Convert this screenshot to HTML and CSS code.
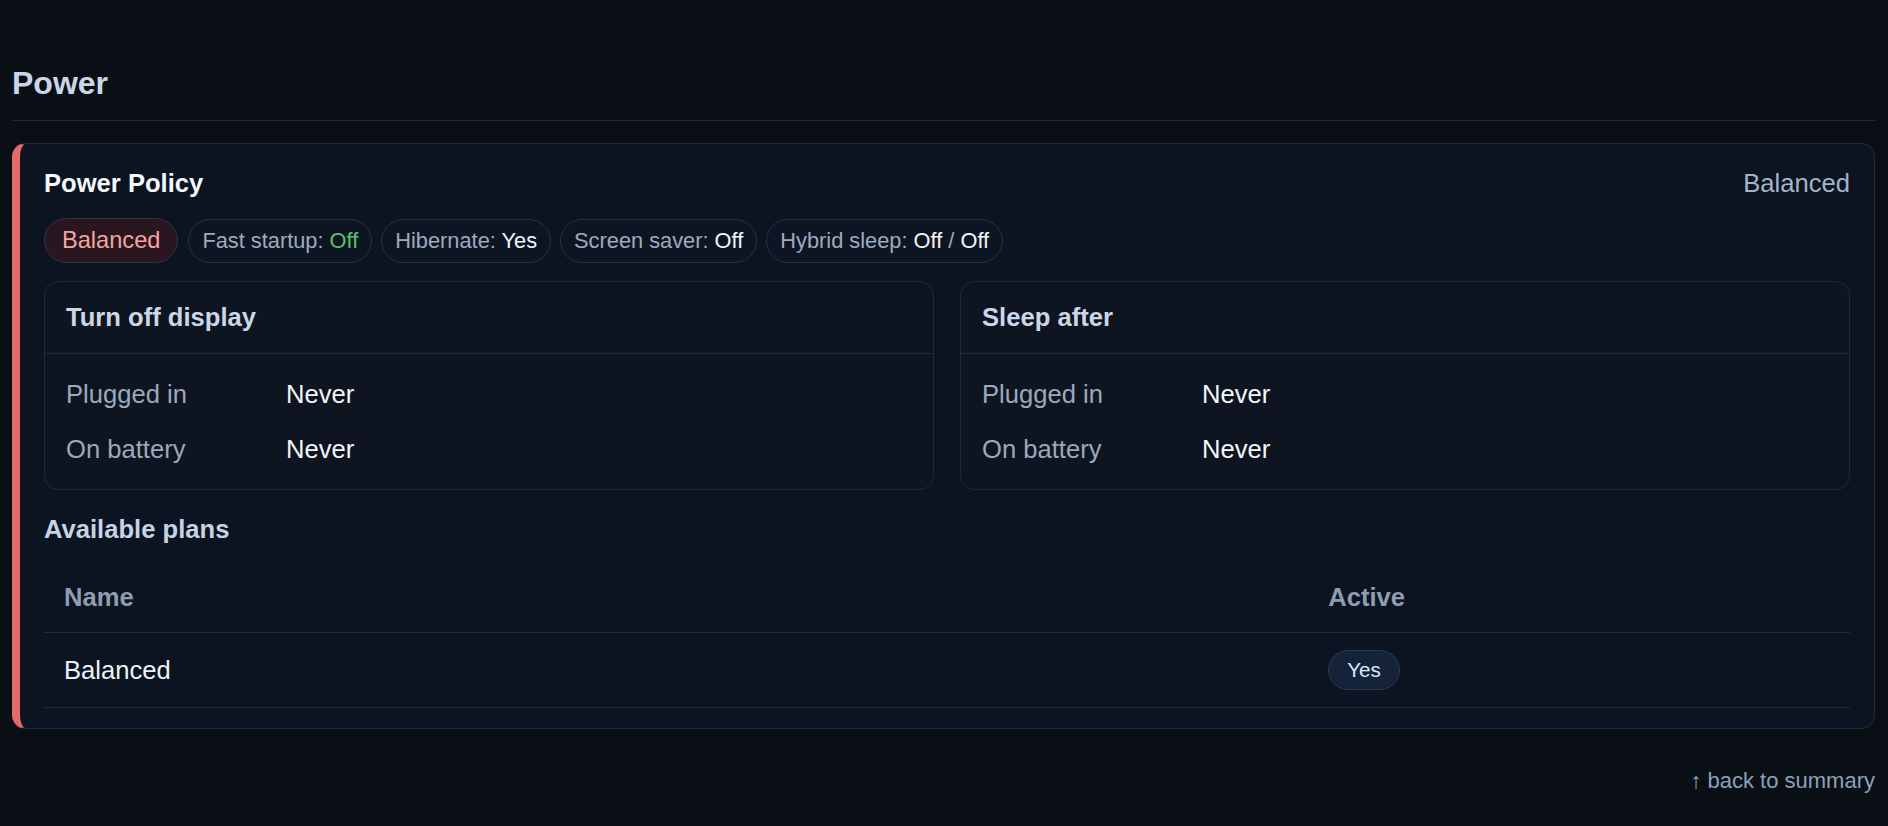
FILE: index.html
```html
<!DOCTYPE html>
<html lang="en">
<head>
<meta charset="utf-8">
<title>Power</title>
<link rel="stylesheet" href="styles.css">
</head>
<body>
<main class="page">
  <h2 class="section-title">Power</h2>

  <section class="card">
    <div class="card-head">
      <h3 class="card-title">Power Policy</h3>
      <span class="card-meta">Balanced</span>
    </div>

    <div class="chips">
      <span class="chip chip-accent">Balanced</span>
      <span class="chip">Fast startup: <b class="v v-good">Off</b></span>
      <span class="chip">Hibernate: <b class="v">Yes</b></span>
      <span class="chip">Screen saver: <b class="v">Off</b></span>
      <span class="chip">Hybrid sleep: <b class="v">Off</b> / <b class="v">Off</b></span>
    </div>

    <div class="panels">
      <div class="panel">
        <div class="panel-head">Turn off display</div>
        <div class="kv">
          <span class="k">Plugged in</span><span class="val">Never</span>
          <span class="k">On battery</span><span class="val">Never</span>
        </div>
      </div>
      <div class="panel">
        <div class="panel-head">Sleep after</div>
        <div class="kv">
          <span class="k">Plugged in</span><span class="val">Never</span>
          <span class="k">On battery</span><span class="val">Never</span>
        </div>
      </div>
    </div>

    <h4 class="sub-title">Available plans</h4>
    <table class="plans">
      <thead>
        <tr><th class="col-name">Name</th><th>Active</th></tr>
      </thead>
      <tbody>
        <tr><td>Balanced</td><td><span class="pill">Yes</span></td></tr>
      </tbody>
    </table>
  </section>

  <div class="back"><a href="#summary">↑ back to summary</a></div>
</main>
</body>
</html>
```

FILE: styles.css
```css
html, body {
  margin: 0;
  padding: 0;
  background: #0a0e15;
}

body {
  font-family: "Liberation Sans", Arial, sans-serif;
  color: #e8edf4;
}

.page {
  padding: 65px 13px 16px 12px;
}

.section-title {
  margin: 0 0 22px;
  padding-bottom: 18px;
  font-size: 32px;
  line-height: 37px;
  font-weight: 700;
  color: #c9d6e7;
  border-bottom: 1px solid #232b38;
}

.card {
  display: flex;
  flex-direction: column;
  gap: 18px;
  background: #0c1321;
  border: 1px solid #222b3b;
  border-left: 8px solid #e36a6a;
  border-radius: 14px;
  padding: 25px 24px 20px 24px;
}

.card-head {
  display: flex;
  justify-content: space-between;
  align-items: baseline;
  margin-bottom: 2px;
}

.card-title {
  margin: 0;
  font-size: 25.6px;
  line-height: 29.4px;
  font-weight: 700;
  color: #f3f6fa;
}

.card-meta {
  font-size: 25.6px;
  line-height: 29.4px;
  color: #a3b3c8;
}

.chips {
  display: flex;
  flex-wrap: wrap;
  align-items: center;
  gap: 9px;
}

.chip {
  display: inline-block;
  padding: 8px 13px;
  border: 1px solid #283244;
  border-radius: 999px;
  background: #0e1522;
  font-size: 21.8px;
  color: #9cabbf;
  white-space: nowrap;
}

.chip .v {
  font-weight: 400;
  color: #f2f5f9;
}

.chip .v-good {
  color: #56c271;
}

.chip-accent {
  padding: 8px 17px;
  font-size: 23.6px;
  background: #2a161e;
  border-color: #2f3446;
  color: #f5a3a3;
  margin-right: 1px;
}

.panels {
  display: grid;
  grid-template-columns: 1fr 1fr;
  gap: 26px;
}

.panel {
  background: #0f1520;
  border: 1px solid #212a38;
  border-radius: 14px;
}

.panel-head {
  padding: 21px 21px 20px;
  font-size: 25.6px;
  line-height: 29.4px;
  font-weight: 700;
  color: #cad7e9;
  border-bottom: 1px solid #212a38;
}

.kv {
  display: grid;
  grid-template-columns: 220px 1fr;
  row-gap: 26px;
  padding: 26px 21px 24px;
  font-size: 25.6px;
  line-height: 29.4px;
}

.kv .k {
  color: #9aa9bc;
}

.kv .val {
  color: #f3f6fa;
}

.sub-title {
  margin: 7px 0 1px;
  font-size: 25.6px;
  line-height: 29.4px;
  font-weight: 700;
  color: #c6d3e5;
}

.plans {
  width: 100%;
  border-collapse: collapse;
  font-size: 25.6px;
  line-height: 29.4px;
}

.plans th {
  text-align: left;
  padding: 20px 20px;
  font-weight: 700;
  color: #8f9db1;
  border-bottom: 1px solid #222b3a;
}

.plans .col-name {
  width: 70%;
}

.plans td {
  padding: 17px 20px;
  vertical-align: middle;
  color: #eef2f7;
  border-bottom: 1px solid #222b3a;
}

.pill {
  display: inline-block;
  vertical-align: middle;
  padding: 7px 18px;
  font-size: 20.6px;
  line-height: normal;
  color: #dfe9f7;
  background: #14223a;
  border: 1px solid #2a3852;
  border-radius: 999px;
}

.back {
  margin-top: 39px;
  text-align: right;
  font-size: 22px;
  line-height: 25.3px;
}

.back a {
  color: #8ca1bb;
  text-decoration: none;
}
```
